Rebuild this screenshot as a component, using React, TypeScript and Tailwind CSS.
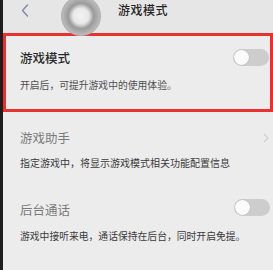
import React from "react";

const font = { fontFamily: '"Noto Sans CJK SC", "Noto Sans", sans-serif' };

function Toggle() {
  return (
    <div className="w-[36px] h-[17px] rounded-full bg-[#cdcdcd] flex items-center pl-[1px]">
      <div className="w-[15px] h-[15px] rounded-full bg-[#fbfbfb] shadow-[0_0_1px_rgba(0,0,0,0.25)]" />
    </div>
  );
}

export default function App() {
  return (
    <div className="w-[273px] h-[270px] flex overflow-hidden bg-[#ececec]" style={font}>
      <div className="w-[3px] h-full bg-[#1d1d1d] shrink-0" />
      <div className="flex-1 flex flex-col relative">
        {/* header */}
        <div className="h-[33px] flex items-start pt-[3px] bg-[#e6e6e6] relative">
          <svg width="8" height="13" viewBox="0 0 8 13" className="ml-[18px] mt-[1px]">
            <path d="M6.5 1 L1.5 6.5 L6.5 12" fill="none" stroke="#7d88a8" strokeWidth="1.4" strokeLinecap="round" strokeLinejoin="round" />
          </svg>
          <span className="ml-[89px] text-[12px] leading-[14px] font-medium text-[#262626] tracking-[0.5px]">游戏模式</span>
          <div className="absolute left-[58px] top-[-4px] w-[40px] h-[40px] rounded-full bg-[radial-gradient(circle,#f4f4f4_0%,#e8e8e8_28%,#9a9a9a_45%,#b8b8b8_65%,#8c8c8c_90%,#d0d0d0_100%)]" />
        </div>
        {/* red box */}
        <div className="h-[79px] border-[3px] border-[#e8322f] flex flex-col pl-[14px] pr-[1px]">
          <div className="mt-[13px] flex items-center justify-between h-[17px]">
            <span className="text-[12.5px] leading-[17px] text-[#2a2a2a] font-medium">游戏模式</span>
            <Toggle />
          </div>
          <div className="mt-[13px] text-[9.8px] leading-[12px] text-[#505050]">开启后，可提升游戏中的使用体验。</div>
        </div>
        {/* section 2 */}
        <div className="flex flex-col pl-[17px] pr-[4px]">
          <div className="mt-[17px] flex items-center justify-between h-[17px]">
            <span className="text-[12.5px] leading-[17px] text-[#7a7a7a]">游戏助手</span>
            <svg width="6" height="10" viewBox="0 0 6 10">
              <path d="M1 1 L5 5 L1 9" fill="none" stroke="#cfcfcf" strokeWidth="1.2" />
            </svg>
          </div>
          <div className="mt-[11px] text-[10px] leading-[12px] text-[#3a3a3a]">指定游戏中，将显示游戏模式相关功能配置信息</div>
        </div>
        {/* section 3 */}
        <div className="flex flex-col pl-[17px] pr-[3px]">
          <div className="mt-[30px] flex items-center justify-between h-[17px]">
            <span className="text-[12.5px] leading-[17px] text-[#7a7a7a] mt-[4px]">后台通话</span>
            <Toggle />
          </div>
          <div className="mt-[14px] text-[9.8px] leading-[12px] text-[#3a3a3a]">游戏中接听来电，通话保持在后台，同时开启免提。</div>
        </div>
      </div>
    </div>
  );
}
